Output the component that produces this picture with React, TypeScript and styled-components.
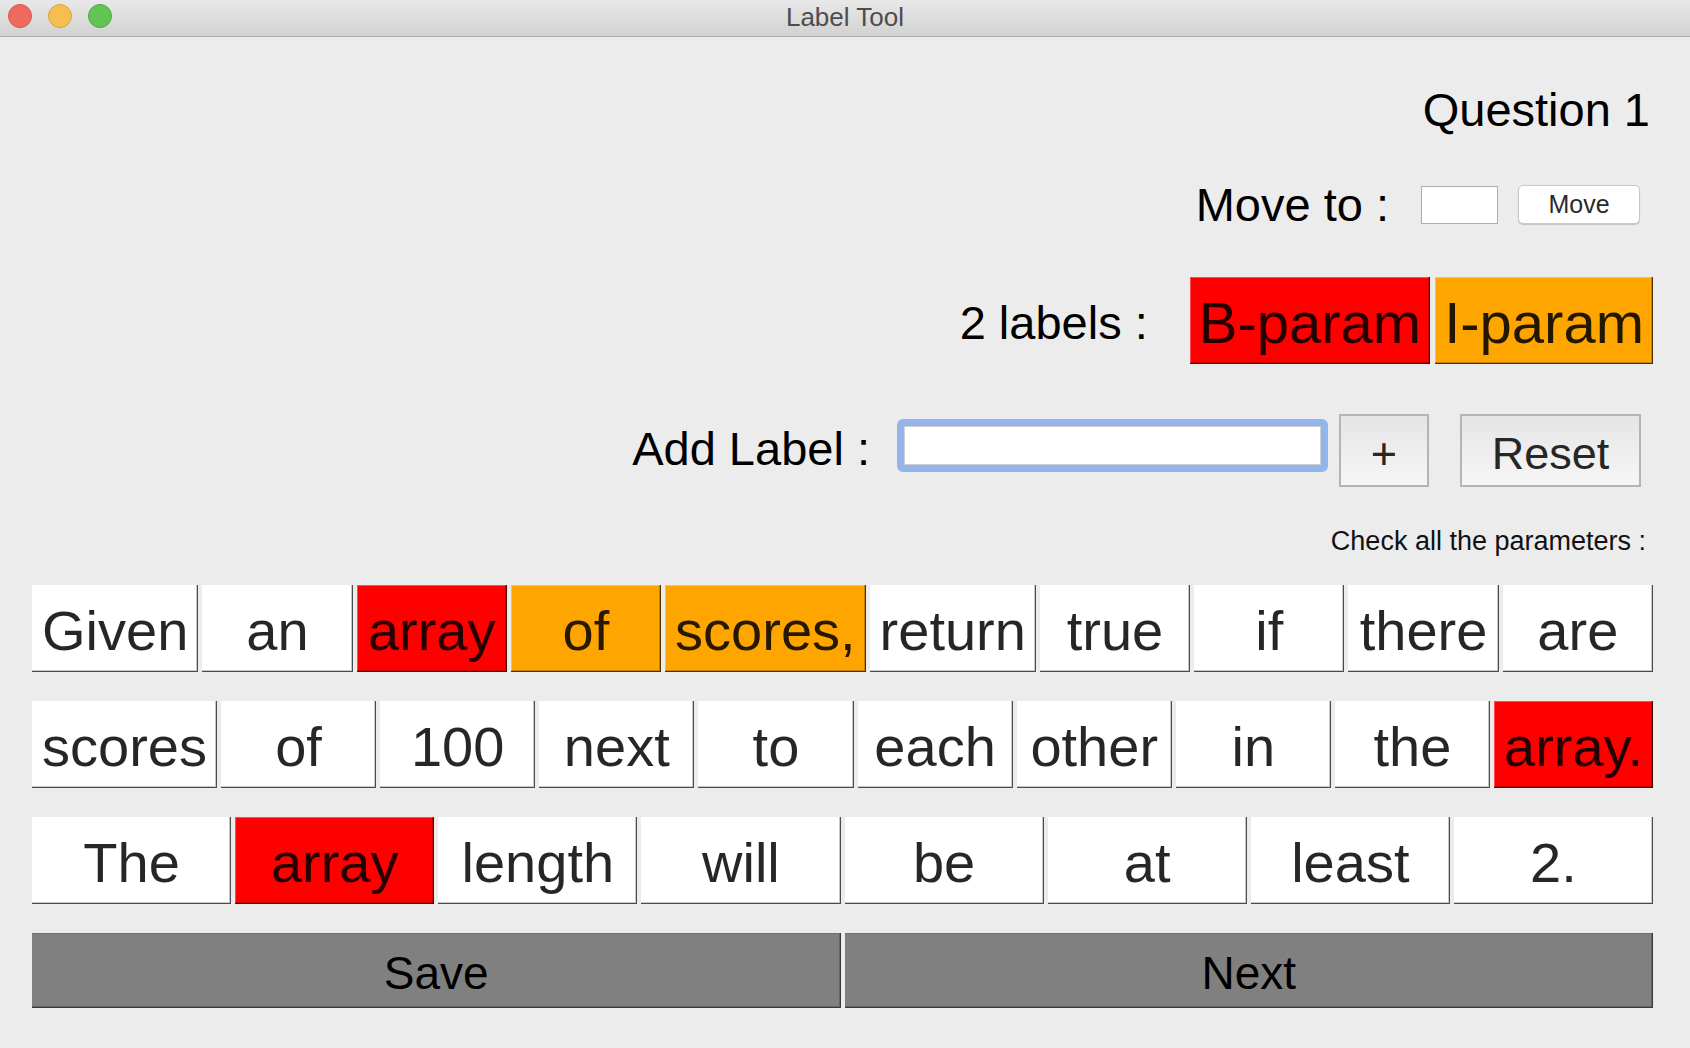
import styled, { createGlobalStyle, css } from "styled-components"

type Tone = "plain" | "red" | "orange"

const GlobalStyle = createGlobalStyle`
  html, body {
    margin: 0;
    padding: 0;
    background: #ececec;
  }
  body {
    font-family: "Liberation Sans", Arial, sans-serif;
    color: #000;
  }
  * {
    box-sizing: border-box;
  }
`

const toneColors: Record<Tone, string> = {
  plain: "#ffffff",
  red: "#ff0000",
  orange: "#ffa500",
}

// Tk style raised relief: light top/left, dark bottom/right
const raised = css`
  box-shadow: inset -1px -1px 0 rgba(0, 0, 0, 0.62), inset -2px -2px 0 rgba(0, 0, 0, 0.22),
    inset 1px 1px 0 rgba(255, 255, 255, 0.3);
`

const Window = styled.div`
  display: flex;
  flex-direction: column;
  min-height: 100vh;
  background: #ececec;
`

const TitleBar = styled.div`
  display: grid;
  grid-template-columns: 1fr auto 1fr;
  height: 37px;
  background: linear-gradient(#e8e8e8, #d2d2d2);
  border-bottom: 1px solid #ababab;
`

const Lights = styled.div`
  display: flex;
  gap: 16px;
  padding: 4px 0 0 8px;
`

const Light = styled.span<{ $fill: string; $edge: string }>`
  width: 24px;
  height: 24px;
  border-radius: 50%;
  background: ${(p) => p.$fill};
  border: 1px solid ${(p) => p.$edge};
`

const Title = styled.div`
  font-size: 26px;
  line-height: 1;
  padding-top: 4px;
  color: #4d4d4d;
`

const Content = styled.div`
  display: flex;
  flex-direction: column;
  padding: 0 37px 0 32px;
`

const Header = styled.div`
  display: flex;
  flex-direction: column;
  align-items: flex-end;
`

const Question = styled.div`
  margin: 49px 3px 0 0;
  font-size: 47px;
  line-height: 1;
`

const HeaderRow = styled.div<{ $top: number; $right: number; $height: number }>`
  display: flex;
  align-items: center;
  height: ${(p) => p.$height}px;
  margin-top: ${(p) => p.$top}px;
  margin-right: ${(p) => p.$right}px;
`

// $shift > 0 pushes the text down, < 0 lifts it
const HeaderLabel = styled.span<{ $shift: number; $gap: number }>`
  font-size: 47px;
  line-height: 1;
  padding-top: ${(p) => Math.max(p.$shift, 0) * 2}px;
  padding-bottom: ${(p) => Math.max(-p.$shift, 0) * 2}px;
  margin-right: ${(p) => p.$gap}px;
  white-space: nowrap;
`

const SmallInput = styled.input`
  width: 77px;
  height: 38px;
  margin-right: 20px;
  border: 1px solid #acacac;
  background: #fff;
  outline: none;
`

const MoveButton = styled.button`
  width: 122px;
  height: 39px;
  border: 1px solid #c8c8c8;
  border-radius: 5px;
  background: #fff;
  box-shadow: 0 1px 1px rgba(0, 0, 0, 0.18);
  font-family: inherit;
  font-size: 25px;
  line-height: 1;
  color: #2a2a2a;
  padding: 0;
`

const Chips = styled.div`
  display: flex;
  gap: 5px;
`

const Chip = styled.div<{ $tone: Tone }>`
  height: 87px;
  display: flex;
  align-items: center;
  padding: 4px 9px 0;
  background: ${(p) => toneColors[p.$tone]};
  font-size: 58px;
  line-height: 1;
  color: rgba(0, 0, 0, 0.86);
  ${raised}
`

const FocusRing = styled.div`
  align-self: flex-start;
  margin: 5px 11px 0 0;
  padding: 7px;
  border-radius: 6px;
  background: #92b6ec;
`

const LabelInput = styled.input`
  display: block;
  width: 417px;
  height: 39px;
  border: 1px solid #d0d0d0;
  background: #fff;
  outline: none;
`

const PlainButton = styled.button<{ $width: number; $gap: number }>`
  width: ${(p) => p.$width}px;
  height: 73px;
  margin-right: ${(p) => p.$gap}px;
  padding: 6px 0 0;
  border: 2px solid #b4b4b4;
  background: linear-gradient(#e5e5e5, #f6f6f6);
  font-family: inherit;
  font-size: 45px;
  line-height: 1;
  color: #262626;
`

const CheckNote = styled.div`
  margin: 41px 7px 0 0;
  font-size: 27px;
  line-height: 1;
  color: #111;
`

const WordRows = styled.div`
  display: flex;
  flex-direction: column;
  gap: 29px;
  margin-top: 30px;
`

const WordRow = styled.div`
  display: flex;
  gap: 4px;
  height: 87px;
`

const Word = styled.div<{ $tone: Tone }>`
  flex: 1 1 0;
  display: flex;
  align-items: center;
  justify-content: center;
  padding: 5px 10px 0;
  background: ${(p) => toneColors[p.$tone]};
  font-size: 56px;
  line-height: 1;
  white-space: nowrap;
  color: rgba(0, 0, 0, 0.85);
  ${raised}
`

const ActionBar = styled.div`
  display: flex;
  gap: 4px;
  height: 75px;
  margin-top: 29px;
`

const ActionButton = styled.div`
  flex: 1 1 0;
  display: flex;
  align-items: center;
  justify-content: center;
  padding-top: 5px;
  background: #808080;
  font-size: 46px;
  line-height: 1;
  color: #000;
  box-shadow: inset -1px -1px 0 #3a3a3a, inset -2px -2px 0 #666, inset 0 1px 0 #6e6e6e;
`

type WordItem = { text: string; tone?: Tone }

const sentence: WordItem[][] = [
  [
    { text: "Given" },
    { text: "an" },
    { text: "array", tone: "red" },
    { text: "of", tone: "orange" },
    { text: "scores,", tone: "orange" },
    { text: "return" },
    { text: "true" },
    { text: "if" },
    { text: "there" },
    { text: "are" },
  ],
  [
    { text: "scores" },
    { text: "of" },
    { text: "100" },
    { text: "next" },
    { text: "to" },
    { text: "each" },
    { text: "other" },
    { text: "in" },
    { text: "the" },
    { text: "array.", tone: "red" },
  ],
  [
    { text: "The" },
    { text: "array", tone: "red" },
    { text: "length" },
    { text: "will" },
    { text: "be" },
    { text: "at" },
    { text: "least" },
    { text: "2." },
  ],
]

export default function App() {
  return (
    <>
      <GlobalStyle />
      <Window>
        <TitleBar>
          <Lights>
            <Light $fill="#ee6a5f" $edge="#d4574d" />
            <Light $fill="#f5bf4f" $edge="#d7a23f" />
            <Light $fill="#61c554" $edge="#4ea83e" />
          </Lights>
          <Title>Label Tool</Title>
          <div />
        </TitleBar>
        <Content>
          <Header>
            <Question>Question 1</Question>
            <HeaderRow $top={46} $right={13} $height={51}>
              <HeaderLabel $shift={0} $gap={32}>
                Move to :
              </HeaderLabel>
              <SmallInput />
              <MoveButton>Move</MoveButton>
            </HeaderRow>
            <HeaderRow $top={47} $right={0} $height={87}>
              <HeaderLabel $shift={2} $gap={42}>
                2 labels :
              </HeaderLabel>
              <Chips>
                <Chip $tone="red">B-param</Chip>
                <Chip $tone="orange">I-param</Chip>
              </Chips>
            </HeaderRow>
            <HeaderRow $top={50} $right={12} $height={73}>
              <HeaderLabel $shift={-2} $gap={27}>
                Add Label :
              </HeaderLabel>
              <FocusRing>
                <LabelInput />
              </FocusRing>
              <PlainButton $width={90} $gap={31}>
                +
              </PlainButton>
              <PlainButton $width={181} $gap={0}>
                Reset
              </PlainButton>
            </HeaderRow>
            <CheckNote>Check all the parameters :</CheckNote>
          </Header>
          <WordRows>
            {sentence.map((row, i) => (
              <WordRow key={i}>
                {row.map((w, j) => (
                  <Word key={j} $tone={w.tone ?? "plain"}>
                    {w.text}
                  </Word>
                ))}
              </WordRow>
            ))}
          </WordRows>
          <ActionBar>
            <ActionButton>Save</ActionButton>
            <ActionButton>Next</ActionButton>
          </ActionBar>
        </Content>
      </Window>
    </>
  )
}
